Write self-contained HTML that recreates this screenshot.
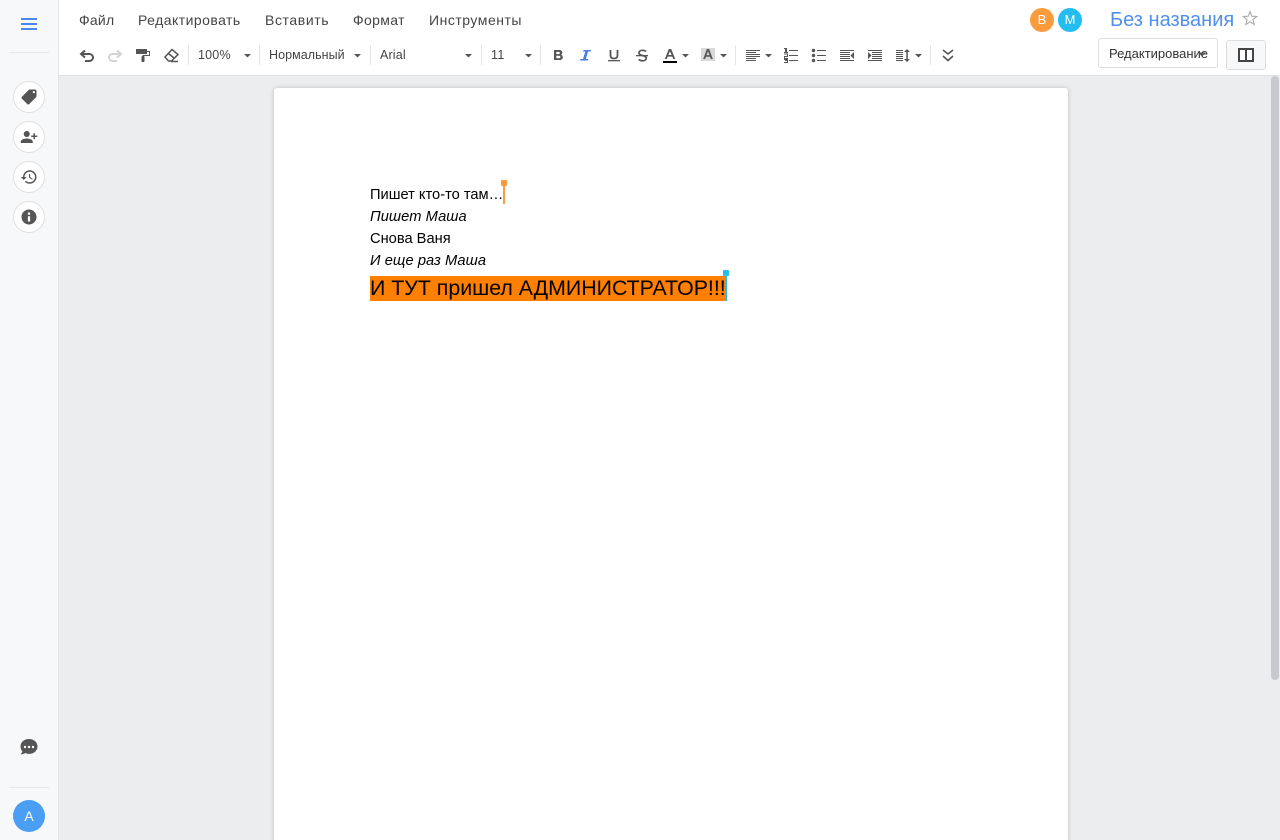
<!DOCTYPE html>
<html><head><meta charset="utf-8"><title>Без названия</title>
<style>
html,body{margin:0;padding:0;width:1280px;height:840px;overflow:hidden;background:#ecedef;font-family:"Liberation Sans",Arial,sans-serif;}
#w{position:absolute;left:0;top:0;width:1280px;height:840px;overflow:hidden;}
.a{position:absolute;white-space:nowrap;}
.m{top:12px;font-size:14px;line-height:17px;color:#444;}
.t{top:47px;font-size:12.5px;line-height:16px;color:#444;}
.c{position:absolute;left:13px;width:30px;height:30px;border:1px solid #e0e0e0;border-radius:50%;background:#fff;}
.c svg{position:absolute;left:6px;top:6px;}
.d{left:370px;font-size:14.67px;line-height:22px;color:#000;}
</style></head><body><div id="w">
<div class="a" style="left:0;top:0;width:58px;height:840px;background:#f7f8fa;border-right:1px solid #e4e6e9"></div>
<div class="a" style="left:59px;top:0;width:1221px;height:75px;background:#fff;border-bottom:1px solid #e2e3e6"></div>
<div class="a" style="left:274px;top:88px;width:794px;height:760px;background:#fff;border-radius:3px;box-shadow:0 0 4px rgba(0,0,0,.22)"></div>
<div class="a" style="left:1271px;top:76px;width:8px;height:604px;background:#c8c9cc;border-radius:4px"></div>

<svg class="a" style="left:0;top:0" width="58" height="840">
<g fill="#4a86f0"><rect x="21" y="18" width="16" height="2"/><rect x="21" y="23" width="16" height="2"/><rect x="21" y="28" width="16" height="2"/></g>
<rect x="9" y="52" width="40" height="1" fill="#e4e6e9"/>
<rect x="9" y="787" width="40" height="1" fill="#e4e6e9"/>
<path fill="#555" d="M29 739c-5 0-8.500 3.300-8.500 7.500 0 1.900.7 3.600 1.900 4.900-.3 1.200-1 2-2 3 1.900 0 3.600-.5 4.800-1.400 1.200.6 2.500.9 3.800.9 5 0 8.500-3.200 8.500-7.400S34 739 29 739z"/>
<g fill="#fff"><circle cx="25" cy="747" r="1.200"/><circle cx="29" cy="747" r="1.200"/><circle cx="33" cy="747" r="1.200"/></g>
<circle cx="29" cy="816" r="16" fill="#4a9ff5"/>
</svg>
<div class="a" style="left:13px;top:808px;width:32px;text-align:center;font-size:14px;line-height:17px;color:#fff">А</div>

<div class="c" style="top:81px"><svg width="18" height="18" viewBox="0 0 24 24"><path fill="#555" transform="rotate(90 12 12)" d="M21.410 11.580l-9-9C12.050 2.220 11.550 2 11 2H4c-1.100 0-2 .9-2 2v7c0 .55.22 1.050.59 1.420l9 9c.36.36.86.58 1.410.58.55 0 1.050-.22 1.410-.59l7-7c.37-.36.59-.86.59-1.410 0-.55-.23-1.060-.59-1.420zM5.500 7C4.670 7 4 6.330 4 5.500S4.670 4 5.500 4 7 4.670 7 5.500 6.330 7 5.500 7z"/></svg></div>
<div class="c" style="top:121px"><svg width="18" height="18" viewBox="0 0 24 24"><path fill="#555" transform="translate(24 0) scale(-1 1)" d="M15 12c2.210 0 4-1.790 4-4s-1.790-4-4-4-4 1.790-4 4 1.790 4 4 4zm-9-2V7H4v3H1v2h3v3h2v-3h3v-2H6zm9 4c-2.670 0-8 1.340-8 4v2h16v-2c0-2.660-5.330-4-8-4z"/></svg></div>
<div class="c" style="top:161px"><svg width="18" height="18" viewBox="0 0 24 24"><path fill="#555" d="M13 3c-4.970 0-9 4.030-9 9H1l3.890 3.890.07.14L9 12H6c0-3.870 3.130-7 7-7s7 3.130 7 7-3.130 7-7 7c-1.930 0-3.680-.79-4.940-2.060l-1.420 1.420C8.270 19.990 10.510 21 13 21c4.970 0 9-4.030 9-9s-4.030-9-9-9zm-1 5v5l4.280 2.540.72-1.210-3.500-2.080V8H12z"/></svg></div>
<div class="c" style="top:201px"><svg width="18" height="18" viewBox="0 0 24 24"><path fill="#555" d="M12 2C6.480 2 2 6.480 2 12s4.480 10 10 10 10-4.480 10-10S17.520 2 12 2zm1.500 16h-3v-7h3v7zm0-9h-3V6h3v3z"/></svg></div>

<div class="a m" style="left:79px;letter-spacing:.25px">Файл</div>
<div class="a m" style="left:138px;letter-spacing:.46px">Редактировать</div>
<div class="a m" style="left:265px;letter-spacing:.6px">Вставить</div>
<div class="a m" style="left:353px;letter-spacing:.35px">Формат</div>
<div class="a m" style="left:429px;letter-spacing:.52px">Инструменты</div>

<div class="a t" style="left:198px;letter-spacing:.2px">100%</div>
<div class="a t" style="left:269px;letter-spacing:.05px">Нормальный</div>
<div class="a t" style="left:380px;letter-spacing:.15px">Arial</div>
<div class="a t" style="left:491px;letter-spacing:.3px">11</div>

<svg class="a" style="left:59px;top:0" width="1221" height="75" viewBox="59 0 1221 75">
<g fill="#e5e5e5"><rect x="188" y="45" width="1" height="20"/><rect x="259" y="45" width="1" height="20"/><rect x="370" y="45" width="1" height="20"/><rect x="481" y="45" width="1" height="20"/><rect x="540" y="45" width="1" height="20"/><rect x="735" y="45" width="1" height="20"/><rect x="930" y="45" width="1" height="20"/></g>
<!-- undo / redo -->
<g fill="none" stroke="#555" stroke-width="2"><path d="M82 54h7.500a3.500 3.500 0 0 1 0 7H85"/><path d="M85 50.500l-4 3.500 4 3.500"/></g>
<g fill="none" stroke="#d4d4d4" stroke-width="2"><path d="M120 54h-7.500a3.500 3.500 0 0 0 0 7H117"/><path d="M117 50.500l4 3.500-4 3.500"/></g>
<!-- paint -->
<path fill="#555" d="M136 49h11v5h-11z"/><path fill="none" stroke="#555" d="M147 51.500h2.500v4H143v1"/><rect x="141.500" y="56" width="3" height="6" rx=".8" fill="#555"/>
<!-- eraser -->
<g fill="none" stroke="#555" stroke-width="1.500"><path d="M172 49.500l6 5-6.500 6.500h-3l-3.500-4z"/><path d="M168.500 53.500l5.500 4.500"/><path d="M171 61.500h7"/></g>
<!-- carets -->
<g fill="#555">
<path d="M244 54h7l-3.500 3.500z"/><path d="M354 54h7l-3.500 3.500z"/><path d="M465 54h7l-3.500 3.500z"/><path d="M525 54h7l-3.500 3.500z"/>
<path d="M682 54h7l-3.500 3.500z"/><path d="M720 54h7l-3.500 3.500z"/><path d="M765 54h7l-3.500 3.500z"/><path d="M915 54h7l-3.500 3.500z"/>
</g>
<!-- B -->
<path fill="#555" fill-rule="evenodd" d="M554 50h5c2 0 3.300 1 3.300 2.700 0 1-.5 1.800-1.300 2.100 1.100.3 1.800 1.200 1.800 2.400 0 1.800-1.300 2.800-3.500 2.800H554zm2.300 1.900v2.200h2.300c.8 0 1.300-.4 1.300-1.100s-.5-1.100-1.300-1.100zm0 3.900v2.400h2.700c.9 0 1.400-.4 1.400-1.200s-.5-1.200-1.400-1.200z"/>
<!-- I -->
<path fill="#4a7fe0" d="M583.500 50h7.500l-.4 1.500h-2.500l-2.300 7.500h2.400l-.4 1.500H580l.4-1.500h2.600l2.300-7.500h-2.200z"/>
<!-- U -->
<path fill="none" stroke="#555" stroke-width="1.800" d="M610.500 50v5.500c0 2 1.400 3 3.500 3s3.500-1 3.500-3V50"/><rect x="608" y="60" width="12" height="1.300" fill="#555"/>
<!-- S -->
<path fill="none" stroke="#555" stroke-width="1.700" d="M646 51.500c-.7-.8-2-1.200-3.500-1.200-2 0-3.500 1-3.500 2.600 0 3.400 7.300 2 7.300 5.400 0 1.500-1.500 2.500-3.500 2.500-1.700 0-3.200-.5-4-1.500"/><rect x="636" y="55" width="12" height="1.300" fill="#555"/>
<!-- A colour -->
<path fill="#555" fill-rule="evenodd" d="M668.800 49h2.400l4 10h-2l-.9-2.400h-4.600l-.9 2.400h-2zm1.200 2.300l-1.600 3.700h3.200z"/><rect x="663" y="61" width="14" height="2" fill="#000"/>
<!-- A bg -->
<rect x="701" y="48" width="14" height="13" fill="#d9d9d9"/>
<path fill="#555" fill-rule="evenodd" d="M706.900 49h2.200l3.700 10h-1.900l-.8-2.300h-4.200l-.8 2.300h-1.900zm1.100 2.300l-1.500 3.800h3z"/>
<!-- align left -->
<g fill="#555"><rect x="746" y="50" width="14" height="1"/><rect x="746" y="52" width="10" height="1"/><rect x="746" y="54" width="14" height="1"/><rect x="746" y="56" width="14" height="1"/><rect x="746" y="58" width="10" height="1"/><rect x="746" y="60" width="10" height="1"/></g>
<!-- ol -->
<g fill="#555"><rect x="789" y="50" width="9" height="1"/><rect x="789" y="55" width="9" height="1"/><rect x="789" y="60" width="9" height="1"/>
<rect x="785" y="48" width="2" height="4"/><rect x="784" y="48" width="1" height="1"/><rect x="784" y="52" width="4" height="1"/>
<rect x="784" y="53.500" width="4" height="1"/><rect x="787" y="54" width="1" height="2"/><rect x="784" y="56" width="4" height="1"/><rect x="784" y="57" width="1" height="1"/><rect x="784" y="58" width="4" height="1"/>
<rect x="784" y="59" width="4" height="1"/><rect x="785" y="60" width="3" height="1"/><rect x="784" y="62" width="4" height="1"/><rect x="787" y="60" width="1" height="3"/></g>
<!-- ul -->
<g fill="#555"><rect x="817" y="50" width="9" height="1"/><rect x="817" y="55" width="9" height="1"/><rect x="817" y="60" width="9" height="1"/><circle cx="813.500" cy="50.500" r="1.700"/><circle cx="813.500" cy="55.500" r="1.700"/><circle cx="813.500" cy="60.500" r="1.700"/></g>
<!-- outdent -->
<g fill="#555"><rect x="840" y="50" width="14" height="1"/><rect x="840" y="52" width="10" height="1"/><rect x="840" y="54" width="10" height="1"/><rect x="840" y="56" width="10" height="1"/><rect x="840" y="58" width="10" height="1"/><rect x="840" y="60" width="14" height="1"/><path d="M854 52v7l-3.500-3.500z"/></g>
<!-- indent -->
<g fill="#555"><rect x="868" y="50" width="14" height="1"/><rect x="872" y="52" width="10" height="1"/><rect x="872" y="54" width="10" height="1"/><rect x="872" y="56" width="10" height="1"/><rect x="872" y="58" width="10" height="1"/><rect x="868" y="60" width="14" height="1"/><path d="M868 52v7l3.500-3.500z"/></g>
<!-- line height -->
<g fill="#555"><rect x="896" y="50" width="7" height="1"/><rect x="896" y="52" width="7" height="1"/><rect x="896" y="54" width="7" height="1"/><rect x="896" y="56" width="7" height="1"/><rect x="896" y="58" width="7" height="1"/><rect x="896" y="60" width="7" height="1"/><rect x="906.300" y="51" width="1.500" height="9"/><path d="M904 52l3-3 3 3zM904 59l3 3 3-3z"/></g>
<!-- chevrons -->
<g fill="none" stroke="#555" stroke-width="1.600"><path d="M943 50l5 4 5-4"/><path d="M943 56l5 4.500 5-4.500"/></g>
<!-- star -->
<path fill="none" stroke="#aaa" stroke-width="1.100" d="M1250 11.500l1.800 4.700 5 .3-3.900 3.100 1.300 4.900-4.200-2.700-4.200 2.700 1.300-4.900-3.900-3.100 5-.3z"/>
</svg>

<div class="a" style="left:1030px;top:8px;width:24px;height:24px;border-radius:50%;background:#fb9b3c;color:#fff;font-size:13px;line-height:24px;text-align:center">В</div>
<div class="a" style="left:1058px;top:8px;width:24px;height:24px;border-radius:50%;background:#24bdf2;color:#fff;font-size:13px;line-height:24px;text-align:center">М</div>
<div class="a" style="left:1110px;top:8px;font-size:20px;line-height:24px;color:#4f8ff0">Без названия</div>
<div class="a" style="left:1098px;top:38px;width:118px;height:28px;border:1px solid #ddd;border-radius:3px;background:#fff"></div>
<div class="a" style="left:1109px;top:46px;font-size:13px;line-height:16px;color:#333">Редактирование</div>
<svg class="a" style="left:1196px;top:50px" width="12" height="8"><path d="M2 2.500h8L6 6.500z" fill="#555"/></svg>
<div class="a" style="left:1226px;top:40px;width:38px;height:28px;border:1px solid #ddd;border-radius:3px;background:#f7f8fa"></div>
<svg class="a" style="left:1238px;top:48px" width="16" height="14"><path fill="#fff" stroke="#444" stroke-width="2" d="M1 1h14v12H1zM8 1v12"/></svg>

<div class="a d" style="top:184px">Пишет кто-то там…</div>
<div class="a d" style="top:206px;font-style:italic;letter-spacing:.07px">Пишет Маша</div>
<div class="a d" style="top:228px">Снова Ваня</div>
<div class="a d" style="top:250px;font-style:italic;letter-spacing:.07px">И еще раз Маша</div>
<div class="a" style="left:370px;top:276px;height:25px;width:356px;background:#ff7f00"></div>
<div class="a" style="left:370px;top:276px;font-size:21.33px;line-height:25px;color:#000">И ТУТ пришел АДМИНИСТРАТОР!!!</div>
<div class="a" style="left:503px;top:181px;width:2px;height:23px;background:#fb9b3c"></div>
<div class="a" style="left:501px;top:180px;width:6px;height:6px;background:#fb9b3c;border-radius:1px"></div>
<div class="a" style="left:725px;top:272px;width:2px;height:29px;background:#24bdf2"></div>
<div class="a" style="left:723px;top:270px;width:6px;height:6px;background:#24bdf2;border-radius:1px"></div>
</div></body></html>
